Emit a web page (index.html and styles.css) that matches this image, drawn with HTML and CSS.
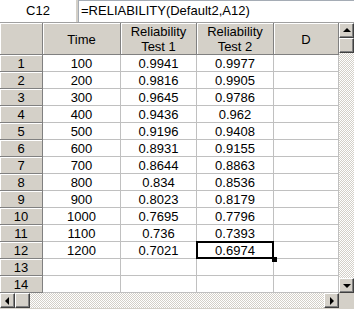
FILE: index.html
```html
<!DOCTYPE html>
<html lang="en">
<head>
    <meta charset="UTF-8">
    <title>Reliability sheet</title>
    <link rel="stylesheet" href="styles.css">
</head>
<body>
    <div class="window">
        <div class="formula-bar">
            <div class="name-box">C12</div>
            <div class="formula">=RELIABILITY(Default2,A12)</div>
        </div>

        <div class="sheet">
            <div class="grid">
                <div class="hd corner"></div>
                <div class="hd col">Time</div>
                <div class="hd col">Reliability<br>Test 1</div>
                <div class="hd col">Reliability<br>Test 2</div>
                <div class="hd col">D</div>

                <div class="hd row">1</div><div class="cell">100</div><div class="cell">0.9941</div><div class="cell">0.9977</div><div class="cell"></div>
                <div class="hd row">2</div><div class="cell">200</div><div class="cell">0.9816</div><div class="cell">0.9905</div><div class="cell"></div>
                <div class="hd row">3</div><div class="cell">300</div><div class="cell">0.9645</div><div class="cell">0.9786</div><div class="cell"></div>
                <div class="hd row">4</div><div class="cell">400</div><div class="cell">0.9436</div><div class="cell">0.962</div><div class="cell"></div>
                <div class="hd row">5</div><div class="cell">500</div><div class="cell">0.9196</div><div class="cell">0.9408</div><div class="cell"></div>
                <div class="hd row">6</div><div class="cell">600</div><div class="cell">0.8931</div><div class="cell">0.9155</div><div class="cell"></div>
                <div class="hd row">7</div><div class="cell">700</div><div class="cell">0.8644</div><div class="cell">0.8863</div><div class="cell"></div>
                <div class="hd row">8</div><div class="cell">800</div><div class="cell">0.834</div><div class="cell">0.8536</div><div class="cell"></div>
                <div class="hd row">9</div><div class="cell">900</div><div class="cell">0.8023</div><div class="cell">0.8179</div><div class="cell"></div>
                <div class="hd row">10</div><div class="cell">1000</div><div class="cell">0.7695</div><div class="cell">0.7796</div><div class="cell"></div>
                <div class="hd row">11</div><div class="cell">1100</div><div class="cell">0.736</div><div class="cell">0.7393</div><div class="cell"></div>
                <div class="hd row">12</div><div class="cell">1200</div><div class="cell">0.7021</div><div class="cell selected">0.6974<span class="handle"></span></div><div class="cell"></div>
                <div class="hd row">13</div><div class="cell"></div><div class="cell"></div><div class="cell"></div><div class="cell"></div>
                <div class="hd row">14</div><div class="cell"></div><div class="cell"></div><div class="cell"></div><div class="cell"></div>
            </div>

            <div class="vscroll">
                <div class="btn"><span class="arrow up"></span></div>
                <div class="btn thumb-v"></div>
                <div class="track"></div>
                <div class="btn"><span class="arrow down"></span></div>
            </div>

            <div class="hscroll">
                <div class="btn"><span class="arrow left"></span></div>
                <div class="btn thumb-h"></div>
                <div class="track"></div>
                <div class="btn"><span class="arrow right"></span></div>
            </div>

            <div class="size-box"></div>
        </div>
    </div>
</body>
</html>
```

FILE: styles.css
```css
/* Global */
body {
    margin: 0;
    padding: 0;
    font-family: 'Liberation Sans', Arial, sans-serif;
    font-size: 13px;
    color: #000000;
}

.window {
    width: 354px;
    height: 309px;
    background-color: #d4d0c8;
    display: flex;
    flex-direction: column;
    overflow: hidden;
}

/* Formula bar */
.formula-bar {
    height: 23px;
    display: flex;
    gap: 2px;
    box-sizing: border-box;
    border-bottom: 1px solid #a0a0a0;
}

.name-box {
    width: 76px;
    background: #ffffff;
    text-align: center;
    line-height: 22px;
}

.formula {
    flex: 1;
    background: #ffffff;
    border: 1px solid #a5acb5;
    border-right: 0;
    border-bottom: 0;
    padding-left: 2px;
    line-height: 20px;
}

/* Sheet */
.sheet {
    display: grid;
    grid-template-columns: 339px 15px;
    grid-template-rows: 270px 15px;
}

.grid {
    display: grid;
    grid-template-columns: 43px 78px 76px 77px 65px;
    grid-template-rows: 32px;
    grid-auto-rows: 17px;
    background: #ffffff;
}

.hd, .cell {
    box-sizing: border-box;
    display: flex;
    align-items: center;
    justify-content: center;
    text-align: center;
}

.hd {
    background: #d4d0c8;
    border-right: 1px solid #808080;
    border-bottom: 1px solid #808080;
    box-shadow: inset 1px 1px 0 #ffffff;
}

.hd.col {
    line-height: 15px;
    padding-top: 1px;
}

.cell {
    border-right: 1px solid #c0c0c0;
    border-bottom: 1px solid #c0c0c0;
    padding-top: 1px;
}

.selected {
    position: relative;
}

.selected::after {
    content: "";
    position: absolute;
    left: -1px;
    top: -1px;
    right: -1px;
    bottom: -1px;
    border: 2px solid #000000;
}

.handle {
    position: absolute;
    right: -4px;
    bottom: -4px;
    width: 5px;
    height: 5px;
    background: #000000;
    z-index: 1;
}

/* Scrollbars */
.vscroll {
    display: flex;
    flex-direction: column;
}

.hscroll {
    display: flex;
}

.track {
    flex: 1;
    background: repeating-conic-gradient(#d4d0c8 0 25%, #ffffff 0 50%) 0 0 / 2px 2px;
}

.btn {
    width: 15px;
    height: 15px;
    box-sizing: border-box;
    flex: none;
    background: #d4d0c8;
    border: 1px solid;
    border-color: #ffffff #404040 #404040 #ffffff;
    box-shadow: inset -1px -1px 0 #808080;
    display: flex;
    align-items: center;
    justify-content: center;
}

.arrow {
    width: 0;
    height: 0;
    border: 4px solid transparent;
}

.arrow.up {
    border-bottom-color: #000000;
    border-top-width: 0;
    margin-top: -1px;
}

.arrow.down {
    border-top-color: #000000;
    border-bottom-width: 0;
}

.arrow.left {
    border-right-color: #000000;
    border-left-width: 0;
    margin-left: -1px;
}

.arrow.right {
    border-left-color: #000000;
    border-right-width: 0;
}

.size-box {
    background: #d4d0c8;
}
```
